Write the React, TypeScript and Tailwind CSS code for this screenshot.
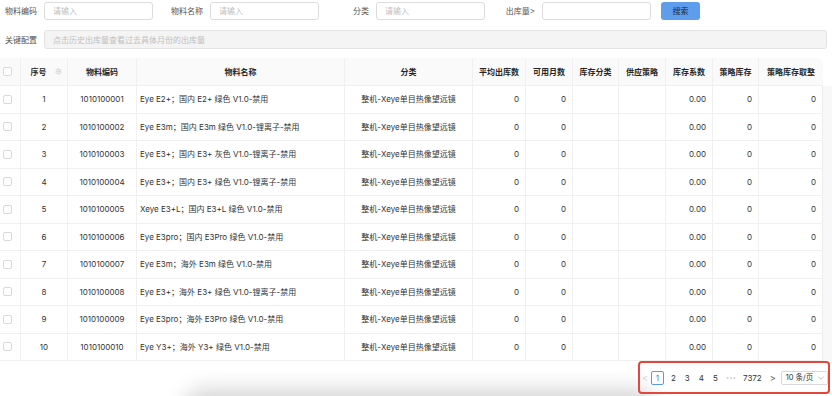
import React from "react";
import { Settings } from "lucide-react";

const rows = [
  ["1", "1010100001", "Eye E2+；国内 E2+ 绿色 V1.0-禁用"],
  ["2", "1010100002", "Eye E3m；国内 E3m 绿色 V1.0-锂离子-禁用"],
  ["3", "1010100003", "Eye E3+；国内 E3+ 灰色 V1.0-锂离子-禁用"],
  ["4", "1010100004", "Eye E3+；国内 E3+ 绿色 V1.0-锂离子-禁用"],
  ["5", "1010100005", "Xeye E3+L；国内 E3+L 绿色 V1.0-禁用"],
  ["6", "1010100006", "Eye E3pro；国内 E3Pro 绿色 V1.0-禁用"],
  ["7", "1010100007", "Eye E3m；海外 E3m 绿色 V1.0-禁用"],
  ["8", "1010100008", "Eye E3+；海外 E3+ 绿色 V1.0-锂离子-禁用"],
  ["9", "1010100009", "Eye E3pro；海外 E3Pro 绿色 V1.0-禁用"],
  ["10", "1010100010", "Eye Y3+；海外 Y3+ 绿色 V1.0-禁用"],
];

const grid =
  "grid grid-cols-[21px_47px_69px_208px_128px_53px_47px_46px_47px_47px_46px_64px]";

function Checkbox() {
  return <div className="w-[9px] h-[9px] rounded-[2px] border border-[#d9d9d9] bg-white" />;
}

function Field({ label, w = "w-[44px]" }: { label: string; w?: string }) {
  return (
    <div className="flex items-center">
      <div className={`${w} pr-[7px] text-right text-[#555]`}>{label}</div>
      <div className="w-[109px] h-[18px] rounded-[3px] border border-[#dcdcdc] bg-white flex items-center pl-[8px] text-[#c0c0c0]">
        {label === "出库量>" ? "" : "请输入"}
      </div>
    </div>
  );
}

export default function App() {
  const cell = "border-r border-[#f0f0f0] flex items-center";
  return (
    <div
      className="w-[832px] h-[396px] overflow-hidden bg-white text-[8px] text-[#333]"
      style={{ fontFamily: '"Inter", "Noto Sans CJK SC", sans-serif' }}
    >
      <div className="pt-[2px] flex items-center gap-[13px]">
        <Field label="物料编码" />
        <Field label="物料名称" />
        <Field label="分类" />
        <Field label="出库量>" />
        <div className="-ml-[3px] w-[39px] h-[18px] rounded-[3px] bg-[#5e9cec] flex items-center justify-center text-[#1e2a3a]">
          搜索
        </div>
      </div>
      <div className="mt-[10px] flex items-center">
        <div className="w-[44px] pr-[7px] text-right text-[#555]">关键配置</div>
        <div className="w-[783px] h-[19px] rounded-[3px] border border-[#e3e3e3] bg-[#f4f4f4] flex items-center pl-[8px] text-[#c0c0c0]">
          点击历史出库量查看过去具体月份的出库量
        </div>
      </div>

      <div className="mt-[9px] flex">
        <div className="w-[823px]">
          <div className={`${grid} h-[28px] bg-[#fafafa] rounded-tr-[6px] font-semibold text-[#262626] border-b border-[#f0f0f0]`}>
            <div className={`${cell} pl-[3px]`}>
              <Checkbox />
            </div>
            <div className={`${cell} justify-center gap-[8px] pl-[4px]`}>
              <span>序号</span>
              <Settings size={7} color="#c4c4c4" strokeWidth={2} />
            </div>
            <div className={`${cell} justify-center`}>物料编码</div>
            <div className={`${cell} justify-center`}>物料名称</div>
            <div className={`${cell} justify-center`}>分类</div>
            <div className={`${cell} justify-center`}>平均出库数</div>
            <div className={`${cell} justify-center`}>可用月数</div>
            <div className={`${cell} justify-center`}>库存分类</div>
            <div className={`${cell} justify-center`}>供应策略</div>
            <div className={`${cell} justify-center`}>库存系数</div>
            <div className={`${cell} justify-center`}>策略库存</div>
            <div className="flex items-center justify-center">策略库存取整</div>
          </div>
          {rows.map((r) => (
            <div key={r[0]} className={`${grid} h-[27.5px] border-b border-[#f0f0f0]`}>
              <div className={`${cell} pl-[3px]`}>
                <Checkbox />
              </div>
              <div className={`${cell} justify-center`}>{r[0]}</div>
              <div className={`${cell} justify-center`}>{r[1]}</div>
              <div className={`${cell} pl-[3px]`}>{r[2]}</div>
              <div className={`${cell} justify-center`}>整机-Xeye单目热像望远镜</div>
              <div className={`${cell} justify-end pr-[6px]`}>0</div>
              <div className={`${cell} justify-end pr-[6px]`}>0</div>
              <div className={cell} />
              <div className={cell} />
              <div className={`${cell} justify-end pr-[6px]`}>0.00</div>
              <div className={`${cell} justify-end pr-[6px]`}>0</div>
              <div className="border-r border-[#ececec] flex items-center justify-end pr-[6px]">0</div>
            </div>
          ))}
        </div>
        <div className="w-[9px] flex flex-col">
          <div className="h-[28px] bg-white" />
          <div className="flex-1 bg-[#f8f8f8]" />
        </div>
      </div>

      <div className="h-[35px] flex items-start">
        <div className="flex-1" />
        <div className="mr-[2px] w-[192px] h-[33px] rounded-[4px] border-2 border-[#e2473b] flex items-center pl-[2px] whitespace-nowrap">
          <span className="text-[#cfcfcf] text-[9px]">&lt;</span>
          <div className="ml-[3px] w-[13px] h-[14px] rounded-[2px] border border-[#5b96e8] text-[#3b7de0] flex items-center justify-center">
            1
          </div>
          <span className="ml-[7px]">2</span>
          <span className="ml-[9px]">3</span>
          <span className="ml-[9px]">4</span>
          <span className="ml-[9px]">5</span>
          <span className="ml-[8px] text-[#c8c8c8] text-[6px]">•••</span>
          <span className="ml-[7px]">7372</span>
          <span className="ml-[8px] text-[#555] text-[9px]">&gt;</span>
          <div className="ml-[5px] w-[47px] h-[14px] rounded-[2px] border border-[#d9d9d9] flex items-center justify-between pl-[4px] pr-[3px] text-[7.5px]">
            <span>10 条/页</span>
            <svg width="6" height="4" viewBox="0 0 6 4" className="shrink-0">
              <path d="M0.5 0.8 L3 3.2 L5.5 0.8" fill="none" stroke="#b5b5b5" strokeWidth="0.9" />
            </svg>
          </div>
        </div>
      </div>
      <div className="ml-[190px] w-[460px] h-[30px] rounded-t-[14px] bg-white shadow-[0_0_22px_6px_rgba(0,0,0,0.18)]" />
    </div>
  );
}
